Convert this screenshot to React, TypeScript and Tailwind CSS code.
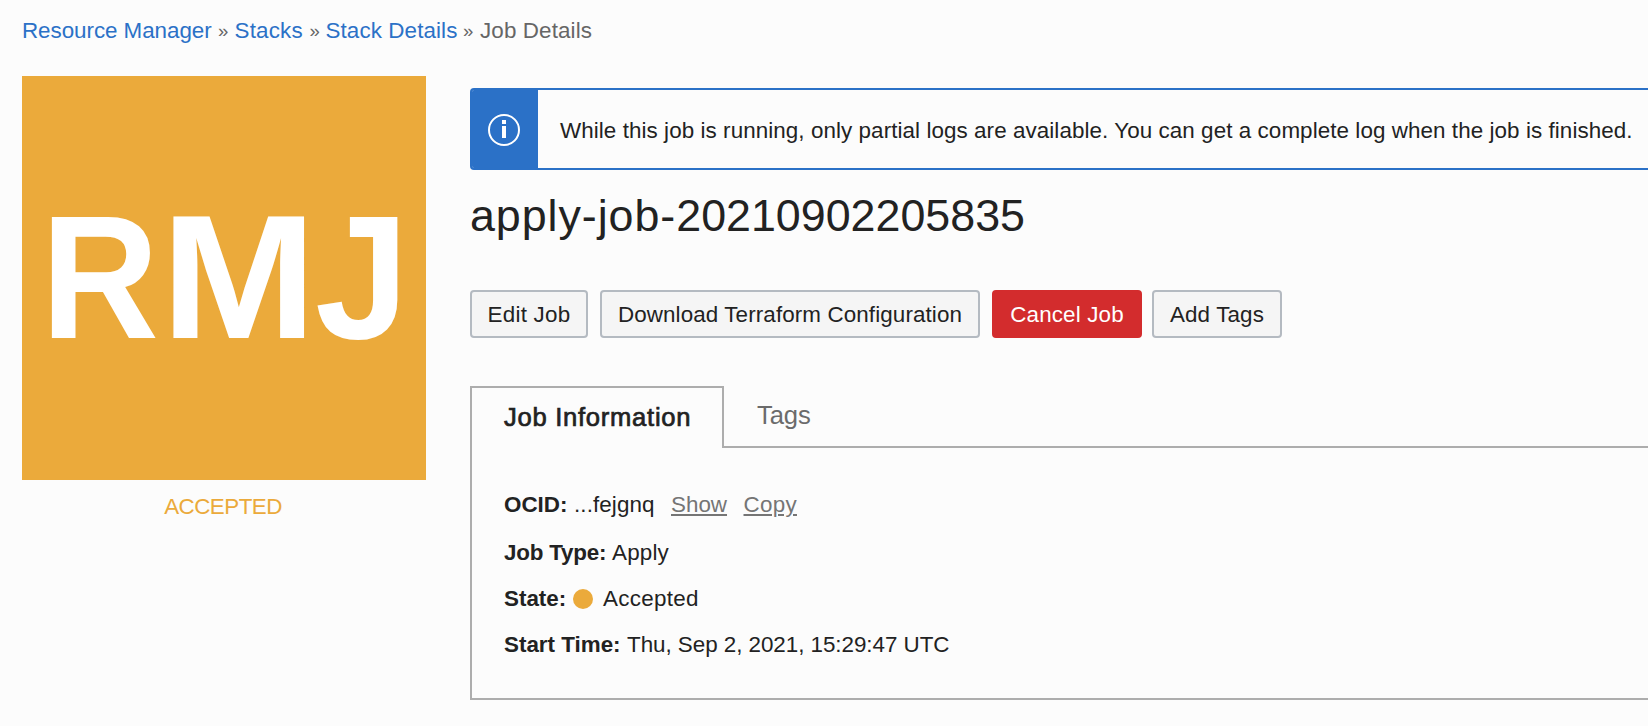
import React from "react";

function Breadcrumbs() {
  return (
    <nav className="flex h-[76px] pt-[19px] pl-[22px] leading-6 text-[#666]">
      <a className="w-[196px] tracking-[-0.05px] text-[#2b71c7]">Resource Manager</a>
      <span className="w-[16.5px] text-[18.5px] leading-[24px]">»</span>
      <a className="w-[75px] tracking-[0.2px] text-[#2b71c7]">Stacks</a>
      <span className="w-4 text-[18.5px] leading-[24px]">»</span>
      <a className="w-[137.5px] tracking-[0.1px] text-[#2b71c7]">Stack Details</a>
      <span className="w-[17px] text-[18.5px] leading-[24px]">»</span>
      <span className="tracking-[0.12px]">Job Details</span>
    </nav>
  );
}

function Emblem() {
  return (
    <div className="flex w-[404px] shrink-0 flex-col">
      <div className="flex h-[404px] bg-[#ebaa3b] pt-[116px] pl-[19px] text-[177px] leading-[170px] font-bold text-white">
        <span className="w-[120px] shrink-0 origin-left scale-x-[0.922]">R</span>
        <span className="w-[154px] shrink-0 origin-left scale-x-[1.055]">M</span>
        <span className="origin-left scale-x-[0.953]">J</span>
      </div>
      <div className="mt-[15px] pr-0.5 text-center leading-6 tracking-[-0.55px] text-[#ebaa3b]">ACCEPTED</div>
    </div>
  );
}

function Notice() {
  return (
    <div className="flex h-[82px] overflow-hidden rounded-l border-y-2 border-l-2 border-[#2b71c7]">
      <div className="flex w-[66px] shrink-0 items-center justify-center bg-[#2b71c7] pt-0.5 pr-0.5">
        <svg width="32" height="32" viewBox="0 0 32 32" fill="none">
          <circle cx="16" cy="16" r="15" stroke="#fff" strokeWidth="2" />
          <path d="M14 6h4v4h-4zM14 12h4v12h-4z" fill="#fff" />
        </svg>
      </div>
      <p className="pt-[29px] pl-[22px] leading-6 tracking-[0.075px] whitespace-nowrap">
        While this job is running, only partial logs are available. You can get a complete log when the job is finished.
      </p>
    </div>
  );
}

const buttonBase = "flex h-12 items-center justify-center rounded border-2 pt-0.5 whitespace-nowrap";
const neutral = "border-[#b4bac1] bg-[#f5f5f5]";

function Actions() {
  return (
    <div className="mt-[30px] flex">
      <button className={`${buttonBase} ${neutral} w-[118px] tracking-[0.25px]`}>Edit Job</button>
      <button className={`${buttonBase} ${neutral} ml-3 w-[380px] tracking-[0.11px]`}>Download Terraform Configuration</button>
      <button className={`${buttonBase} ml-3 w-[150px] border-[#d32c2d] bg-[#d32c2d] tracking-[0.15px] text-white`}>Cancel Job</button>
      <button className={`${buttonBase} ${neutral} ml-2.5 w-[130px] tracking-[0.15px]`}>Add Tags</button>
    </div>
  );
}

function Details() {
  return (
    <section className="mt-12">
      <div className="flex h-[62px] text-[25.6px]">
        <div className="w-[254px] shrink-0 border-x-2 border-t-2 border-[#adadad] pt-[13px] pl-8 leading-8 tracking-[0.72px] whitespace-nowrap [-webkit-text-stroke:0.7px_#222]">
          Job Information
        </div>
        <div className="grow border-b-2 border-[#adadad] pt-[13px] pl-[33px] leading-8 tracking-[-0.1px] text-[#6b6b6b]">Tags</div>
      </div>
      <div className="h-[252px] border-b-2 border-l-2 border-[#adadad] pt-[45px] pl-8">
        <div className="flex h-12 leading-6">
          <b className="w-[70px]">OCID:</b>
          <span className="w-[97px] tracking-[0.1px]">...fejgnq</span>
          <a className="w-[72.5px] text-[#757575] underline decoration-2 underline-offset-2">Show</a>
          <a className="tracking-[0.3px] text-[#757575] underline decoration-2 underline-offset-2">Copy</a>
        </div>
        <div className="flex h-[46px] leading-6">
          <b className="w-[108px] tracking-[-0.2px]">Job Type:</b>
          <span className="tracking-[0.2px]">Apply</span>
        </div>
        <div className="flex h-[46px] leading-6">
          <b className="w-[69px]">State:</b>
          <i className="mt-0.5 mr-[10px] size-5 rounded-full bg-[#ebaa3b]" />
          <span className="tracking-[0.3px]">Accepted</span>
        </div>
        <div className="flex leading-6">
          <b className="w-[123px]">Start Time:</b>
          <span className="tracking-[-0.04px]">Thu, Sep 2, 2021, 15:29:47 UTC</span>
        </div>
      </div>
    </section>
  );
}

export default function App() {
  return (
    <div className="h-[726px] w-[1648px] overflow-hidden bg-[#fcfcfc] font-['Liberation_Sans',Arial,sans-serif] text-[22.4px] text-[#222]">
      <Breadcrumbs />
      <div className="flex pl-[22px]">
        <Emblem />
        <main className="ml-11 grow pt-3">
          <Notice />
          <h1 className="mt-[21px] h-[69px] text-[44.8px] leading-[48px]">
            <span className="tracking-[0.95px]">apply-job-</span>20210902205835
          </h1>
          <Actions />
          <Details />
        </main>
      </div>
    </div>
  );
}
